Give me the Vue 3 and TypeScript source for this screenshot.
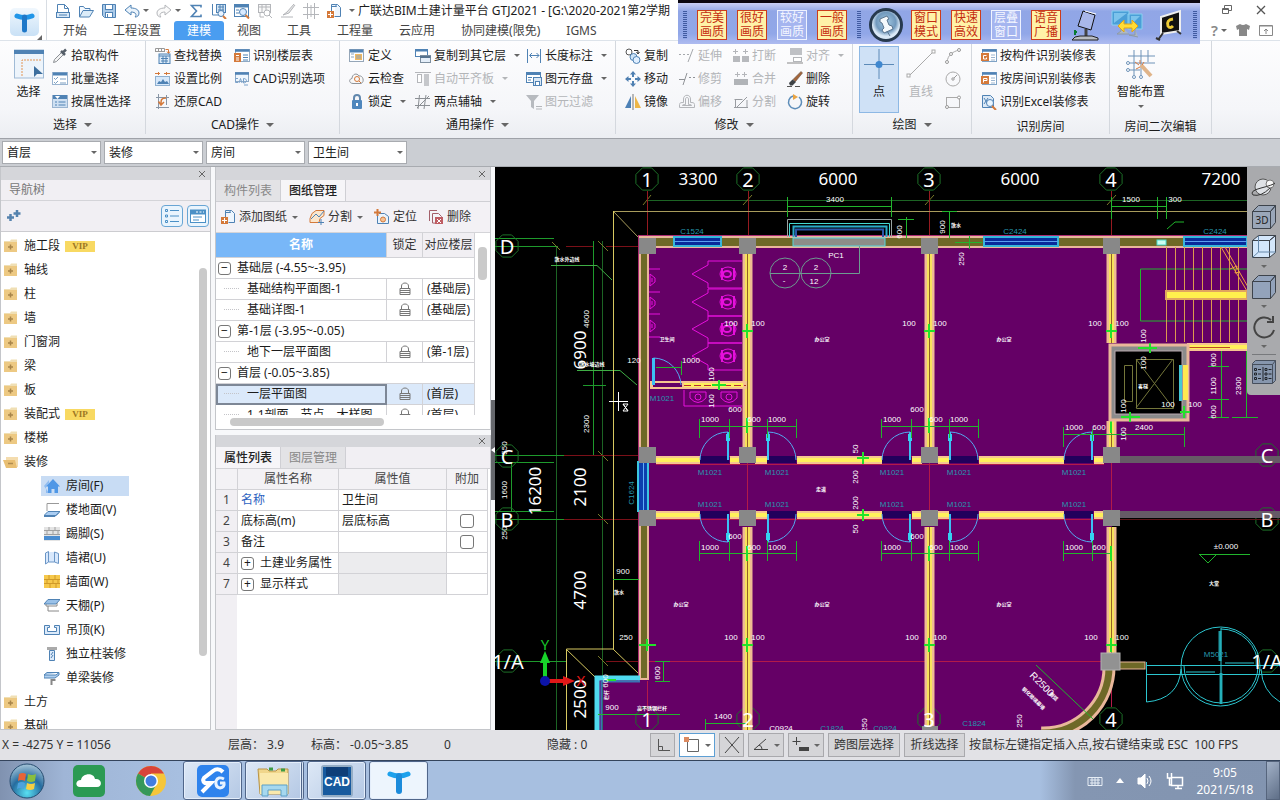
<script setup lang="ts">
import { ref } from 'vue'

type Tool = { icon: string; label: string; off?: boolean; caret?: boolean }
type Group = { id: string; title: string; caret?: boolean; columns: Tool[][] }
type Mark = [number, number, string, number?]

const B = '#4f82b4'
const O = '#d4793a'
const G = '#b4b6ba'

const icons: Record<string, string> = {
  newfile: `<path d="M2.5 1.5h7l4 4v4M2.5 1.5v8M9.5 1.5v4h4" fill="none" stroke="${B}"/><rect x="1.5" y="9.5" width="13" height="5" fill="#d9e9f8" stroke="${B}"/><path d="M4 12h8" stroke="${B}"/>`,
  open: `<path d="M1.500 14V3.500h4l1.500 2h5v2" fill="#f5faff" stroke="${B}"/><path d="M1.500 14L5 7.500h10.500L11.500 14z" fill="#dcecf8" stroke="${B}"/>`,
  save: `<path d="M1.500 1.500h13v13h-11l-2-2z" fill="#a9c9e8" stroke="${B}"/><rect x="4.500" y="1.500" width="7" height="5" fill="#fff" stroke="${B}"/><rect x="4.500" y="9.500" width="7" height="5" fill="#fff" stroke="${B}"/><path d="M6.500 11v3" stroke="${B}"/>`,
  undo: `<path d="M1 7l6-5v3c5 0 8 2 8 5s-2 4-4 4c2-2 1-5-4-5v3z" fill="#eaf3fb" stroke="${B}"/>`,
  redo: `<path d="M15 7L9 2v3C4 5 1 7 1 10s2 4 4 4C3 12 4 9 9 9v3z" fill="#fafafa" stroke="${G}"/>`,
  sum: `<path d="M13 4.500V2.500H3.500L8.500 8l-5 5.500H13v-2" fill="none" stroke="${B}" stroke-width="1.600"/>`,
  calc: `<path d="M1.500 1v11h6" fill="none" stroke="${B}"/><rect x="5.500" y="1.500" width="9" height="8" fill="#d5e5f3" stroke="${B}"/><path d="M7 4h6M7 7h6M9 2v7M12 2v7" stroke="${B}"/><circle cx="10" cy="10.500" r="3" fill="#eaf4ff" stroke="${B}"/><path d="M12 13l3 3" stroke="${O}" stroke-width="2"/>`,
  find: `<rect x=".5" y="1.500" width="14" height="12" fill="#fff" stroke="${B}"/><path d="M1 3h13" stroke="${B}" stroke-width="3"/><path d="M2 7h3M2 10h3" stroke="${B}"/><circle cx="9" cy="9" r="3.500" fill="#d9eaff" stroke="${B}"/><path d="M11.500 12l3.500 3.500" stroke="${O}" stroke-width="2"/>`,
  tablefind: `<rect x="1.500" y="1.500" width="12" height="8" fill="#f8f8f8" stroke="${G}"/><path d="M1 4h12M5 1v8M9 1v8M3 10v4h4" stroke="${G}" fill="none"/><circle cx="10" cy="10" r="3" fill="#fff" stroke="${G}"/><path d="M12 12l3 3" stroke="${G}"/>`,
  brush: `<path d="M14 1L7 9l-4 3 6-2 6-8M1 14h12" fill="#e8e8e8" stroke="${G}"/>`,
  gridg: `<path d="M0 4.500h16M0 11.500h16M4.500 0v16M11.500 0v16M8 2v12" stroke="${G}" fill="none"/>`,
  adddoc: `<path d="M5.500 10V1.500h4l1 2h-5M9.500 1.500h2l3 3v9h-6" fill="#edf6ff" stroke="${B}"/><rect x="1" y="8" width="7" height="7" fill="${O}"/><path d="M4.500 9v5M2 11.500h5" stroke="#fff"/>`,
  dropper: `<path d="M1.500 14.500l1-3L10 4l2 2-7.500 7.500z" fill="#f3f3f3" stroke="#8b8f94"/><path d="M9 3l4 4M10.500 5L14 1.500" stroke="#555e68" stroke-width="2.500"/>`,
  checks: `<rect x=".5" y="1.500" width="15" height="12" fill="#fff" stroke="#9ab4d0"/><path d="M1 3h14" stroke="${B}" stroke-width="3"/><path d="M2 7l1.500 1.500L6 6M2 11l1.500 1.500L6 10M8 8h6M8 12h6" stroke="#7a9dc0" fill="none"/>`,
  props: `<rect x=".5" y="1.500" width="15" height="12" fill="#cfe0f2" stroke="#9ab4d0"/><path d="M1 3h14" stroke="${B}" stroke-width="4"/><path d="M3 2h5l-2.500 3z" fill="#fff"/><path d="M3 8h2M6.500 8h7M3 11h2M6.500 11h7" stroke="${B}"/>`,
  replace: `<path d="M.5 3V.5h9V3M3.500 1v2M6.500 1v2M0 3.500h10" fill="none" stroke="#999"/><path d="M10.500 1.500h3V5M12 3.500L13.500 5.500 15 3.500" fill="none" stroke="${O}"/><rect x="4" y="6" width="11" height="9.500" fill="#ddebf8" stroke="${B}"/><path d="M4 8h11M6 10.500h7M6 13h7M8 8v7M11 8v7" stroke="${B}"/>`,
  scale: `<path d="M0 2.500h5M9 2.500h6M3.500 1v3M11.500 1v3" stroke="${O}"/><rect x=".5" y="5.500" width="14" height="9" fill="#d7e8fa" stroke="#8fb0d0"/><path d="M2 13l2-3 2 1 2-3 2 3 2-1 2 3z" fill="${B}"/>`,
  restore: `<path d="M3.500 0v15M11.500 1v10M1 3.500h13M1 13.500h13" stroke="#8895a5"/><path d="M11 4C6 4 6 6 6 10M3.500 7.500L6 11l3-3" fill="none" stroke="${O}" stroke-width="1.500"/>`,
  floors: `<rect x="1.500" y="1.500" width="14" height="12" fill="#fff" stroke="#8ea9c4"/><path d="M1 2.500h14.500" stroke="${B}" stroke-width="2.500"/><rect x="0" y="5" width="7" height="9" fill="${O}"/><path d="M2 7.500h3M2 10h3M2 12h3" stroke="#fff"/><path d="M9 7h5M9 9.500h5M9 12h5" stroke="${B}"/>`,
  cadopt: `<rect x="1.500" y="1.500" width="13" height="9" fill="#eff6fd" stroke="#8ea9c4"/><path d="M1 2.500h14" stroke="${B}" stroke-width="2.500"/><path d="M4 7.500H1.500v4H4M5 12l1.500-4.500L8 12M9.500 7.500v4.500c4 0 4-4.500 0-4.500M10 14h4" fill="none" stroke="#7ba2ca"/>`,
  define: `<rect x=".5" y="1.500" width="14" height="12" fill="#fbfdff" stroke="#95a6b8"/><path d="M1 3h13" stroke="${B}" stroke-width="3"/><rect x="6" y="6" width="7" height="6" fill="#f0b860"/><path d="M2 6h3M2 9h3M7 8h5M7 10h5" stroke="#8ba4bd"/>`,
  cloud: `<path d="M4 12.500C0 12.500-.5 8 3 7.500 3 3 8 1.500 10 5c4-1 6 6 2 7.500z" fill="#f8f8f8" stroke="#8e9399"/><circle cx="8" cy="8" r="2.500" fill="none" stroke="${O}"/><path d="M10 10l2 2" stroke="${O}"/>`,
  lock: `<path d="M5 7V4c0-4 6-4 6 0v3" fill="none" stroke="#6188ae" stroke-width="2"/><rect x="3" y="6" width="10" height="9" rx="1" fill="#4f87bd"/><path d="M8 9v3" stroke="#fff" stroke-width="2"/>`,
  layers: `<rect x=".5" y="1.500" width="12" height="7" fill="#fff" stroke="${B}"/><path d="M1 2.500h12" stroke="${B}" stroke-width="2"/><rect x="5.500" y="7.500" width="10" height="7" fill="#e4eef9" stroke="#7c8e9f"/><path d="M5 9h10.500" stroke="#56738f" stroke-width="2"/>`,
  align: `<path d="M0 1.500h16" stroke="${G}"/><rect x="2.500" y="3.500" width="4" height="8" fill="#fff" stroke="${G}"/><rect x="9" y="3" width="5" height="12" fill="#c5c7cb"/>`,
  axis: `<path d="M0 4.500h15M0 11.500h15M4.500 1L3 15M11 1L9 15M2 14L14 2" stroke="#8b8f94" fill="none"/>`,
  length: `<path d="M1.500 1v14M14.500 1v14M4 7.500h9M6 5L3.500 7.500 6 10M10.500 5L13 7.500 10.500 10" fill="none" stroke="${B}"/>`,
  store: `<rect x=".5" y="1.500" width="14" height="10" fill="#fff" stroke="${B}"/><path d="M1 3h13" stroke="${B}" stroke-width="2"/><path d="M2 6.500h4M2 9h3" stroke="${B}"/><rect x="7.500" y="6.500" width="8" height="8" fill="#dce9f6" stroke="${B}"/><rect x="9.500" y="10.500" width="4" height="4" fill="#fff" stroke="${B}"/>`,
  filter: `<path d="M0 1h13L8 7v8l-3-2V7z" fill="#b7babf"/><path d="M10 12.500h6M10 15h6" stroke="${G}"/>`,
  copy: `<circle cx="4" cy="4" r="3" fill="#fff" stroke="#555"/><path d="M9 2.500h4V5M11.500 4L13 6l1.500-2" fill="none" stroke="#333"/><circle cx="8.500" cy="9" r="3.500" fill="#cce3f8" stroke="${B}"/><circle cx="11.500" cy="12" r="3.500" fill="#e0efff" stroke="${B}"/>`,
  move: `<path d="M8 0l3 3.500H5zM8 16l3-3.500H5zM0 8l3.500-3v6zM16 8l-3.500-3v6z" fill="#4e7eb0"/><path d="M8 3v3M8 10v3M3 8h3M10 8h3" stroke="${B}" stroke-width="2"/>`,
  mirror: `<path d="M6 2v12H0z" fill="#4d81b6"/><path d="M8 0v16" stroke="#777"/><path d="M10 2v12h6z" fill="#eeb648"/>`,
  extend: `<path d="M0 6.500h2M4 6.500h2M8 6.500h2M9 14l5-13" stroke="#a5a8ac"/>`,
  trim: `<path d="M0 8.500h6M4 14L8 2M10 6.500h2M14 6.500h2" stroke="#909397"/>`,
  offset: `<path d="M.5 13.500v-3c0-2 2-2 4-2V5c0-5 7-5 7 0v3.500c2 0 4 0 4 2v3zM3.500 11.500h9c0-1-1-1-3-1V5c0-2-3-2-3 0v5.500c-2 0-3 0-3 1z" fill="none" stroke="${G}"/>`,
  breaks: `<path d="M2.500 1v5M0 3.500h5M12.500 1v5M10 3.500h5" stroke="${G}" fill="none"/><rect x="0" y="8" width="7" height="6" fill="#b7b9bd"/><rect x="9" y="8" width="7" height="6" fill="#b7b9bd"/>`,
  join: `<path d="M4.500 1v5M2 3.500h5M11.500 1v5M9 3.500h5" stroke="${G}" fill="none"/><rect x="1" y="8" width="14" height="6" fill="#b0b3b7"/>`,
  split: `<path d="M1.500 5.500h8M2.500 5v9M1 13.500h14M14 13V6M4 13L14 3" fill="none" stroke="#999ca1"/>`,
  aligng: `<rect x="3" y="0" width="12" height="7" fill="#bfc1c5"/><rect x="6.500" y="9.500" width="8" height="4" fill="#fff" stroke="${G}"/><path d="M0 15h16" stroke="#888"/>`,
  erase: `<path d="M6 8.500L14 .5l1.500 1.500-7 8.500z" fill="#a4653a" stroke="#665045" stroke-width=".6"/><path d="M2 12l3.500-3.500L9 11l-3.500 3.500H3z" fill="#3d4246"/><path d="M0 15.500h15" stroke="#555" stroke-dasharray="5 3"/>`,
  rotate: `<path d="M12 3a6.500 6.500 0 1 1-6-1" fill="none" stroke="#5d8db9" stroke-width="1.500"/><path d="M6 0l5 3-5 3z" fill="#e8a445"/>`,
  arc: `<path d="M2 14C3 7 7 4 14 2" fill="none" stroke="#aaa"/><circle cx="2" cy="14" r="1.500" fill="#fff" stroke="#999"/><circle cx="6" cy="6" r="1.500" fill="#fff" stroke="#999"/><circle cx="14" cy="2" r="1.500" fill="#fff" stroke="#999"/>`,
  circle: `<circle cx="8" cy="8" r="7" fill="none" stroke="#aaa"/><circle cx="8" cy="8" r="1.200" fill="none" stroke="#999"/><path d="M9 7l3-3" stroke="#999"/>`,
  rect: `<rect x="1.500" y="3.500" width="13" height="10" fill="none" stroke="#aaa"/><circle cx="14" cy="3.500" r="1.500" fill="#fff" stroke="#999"/><circle cx="2" cy="13" r="1.500" fill="#fff" stroke="#999"/>`,
  recog: `<rect x="1.500" y="1.500" width="14" height="12" fill="#fff" stroke="#7fa3c6"/><path d="M1 2.500h14.500" stroke="${B}" stroke-width="2.500"/><rect x="0" y="5" width="8" height="8" fill="${O}"/><path d="M5.500 7.500h-3v3.500h3V9.500" fill="none" stroke="#fff"/><path d="M10 7h4M10 9.500h4M10 12h4" stroke="#9bb5cf"/>`,
  recogf: `<rect x="1.500" y="1.500" width="14" height="12" fill="#fff" stroke="#7fa3c6"/><path d="M1 2.500h14.500" stroke="${B}" stroke-width="2.500"/><rect x="0" y="5" width="8" height="8" fill="${O}"/><path d="M2.500 11.500v-4h3.500v2H3" fill="none" stroke="#fff"/><path d="M10 7h4M10 9.500h4M10 12h4" stroke="#9bb5cf"/>`,
  excel: `<path d="M1.500 1.500h8l3 3v9h-11z" fill="#dce9f6" stroke="${B}"/><path d="M3 4l4 6M3 10l4-6" stroke="${B}"/><circle cx="9" cy="9" r="3.500" fill="#eaf5ff" stroke="${B}"/><path d="M11 12l4 4" stroke="${O}" stroke-width="2"/>`,
  cut: `<path d="M3 4.500L7 1.500h8v5l-4 3-1 4H1v-4z" fill="#fae6cd" stroke="${O}"/><path d="M2 10l5-5 3 3 5-6M9 13.500h6M12 10v6" stroke="${B}" fill="none"/>`,
  locate: `<path d="M5 4.500h5.500l4 3v7H3.500V7" fill="#e9f3fc" stroke="${B}"/><path d="M3.500 0v7M0 3.500h7" stroke="${O}" stroke-width="2"/><circle cx="9" cy="10.500" r="2.500" fill="#f5c195" stroke="${O}"/>`,
  remove: `<path d="M1.500 12V1.500H9M4.500 14V4.500h6l3 3v7z" fill="#f3f5f8" stroke="#a4606a"/><rect x="7" y="8" width="8" height="7" fill="#bf5d63"/><path d="M9 10l4 4M13 10l-4 4" stroke="#fff"/>`,
  folder: `<path d="M1 3h6l1-1.500h6V5H1z" fill="#f0dfb4"/><rect x="1" y="4" width="13" height="10" fill="#edc983"/><path d="M7.500 6.500v5M5 9h5" stroke="#a8854a" stroke-width="1.500"/>`,
  folderopen: `<path d="M3 3h12v10H3z" fill="#f4dcae"/><path d="M0 6h12l2 8H3z" fill="#e9bf72"/><path d="M5 9.500h5" stroke="#b08c50" stroke-width="1.500"/>`,
  house: `<path d="M0 8L5 2v3L2 9v6h3" fill="#8fbcf0"/><path d="M2 8.500L9 1l7 7.500h-2V15h-3.500v-4h-3v4H4V8.500z" fill="#4f97e6"/>`,
  floor: `<path d="M3 9V1.500h12" fill="none" stroke="#999"/><path d="M4 9.500h12l-4 4H0z" fill="#aacdf2" stroke="${B}"/><path d="M0 14.500h11l4-4" stroke="${B}" fill="none"/>`,
  skirting: `<rect x="0" y="1" width="16" height="14" fill="#e4e4e4"/><path d="M0 4.500h16M0 8.500h16M5 1v3M11 1v3M3 5v3M9 5v3M14 5v3" stroke="#a0a0a0"/><rect x="0" y="10" width="16" height="4" fill="#4b8dd0"/>`,
  dado: `<path d="M1.500 3v11l3-2V1.500zM4.500 2v10h6V2M10.500 2l4 1.500v10L10.500 12" fill="#d8e8fc" stroke="#6b96c6"/>`,
  brick: `<rect x="0" y="1" width="16" height="13" fill="#f6c84b"/><path d="M0 5.500h16M0 9.500h16M5 1v4M11 1v4M3 6v3M9 6v3M14 6v3M6 10v4M12 10v4" stroke="#d09a28"/>`,
  ceiling: `<path d="M4 1.500h12L12 6H0z" fill="#9ac1e8" stroke="${B}"/><path d="M2 6v2h11V5M4 8v5h11" fill="none" stroke="#888"/>`,
  hung: `<path d="M.5 3.500h5v2h-2v4h9v-4h-2v-2h5v9H.5z" fill="#dceafa" stroke="${B}"/>`,
  pillar: `<rect x="3" y="1" width="10" height="3" fill="#aaa"/><path d="M5.500 4.500h5v10h-5z" fill="#dceafa" stroke="${B}"/><path d="M7 12l2-3M7 9l2-3" stroke="${B}"/>`,
  beam: `<path d="M3 2.500h12L12 5H0zM0 5v3h11l4-3V2.500" fill="#b0d0f0" stroke="${B}"/><path d="M7.500 9v6M7.500 10h4" stroke="#888" stroke-width="2" fill="none"/>`,
}

const quick = [
  { i: 'newfile' }, { i: 'open' }, { i: 'save' }, { i: 'undo', c: true }, { i: 'redo', c: true }, { i: 'sum' },
  { i: 'calc' }, { i: 'find' }, { i: 'tablefind' }, { i: 'brush' }, { i: 'gridg' }, { i: 'adddoc' },
]
const menus = ['开始', '工程设置', '建模', '视图', '工具', '工程量', '云应用', '协同建模(限免)', 'IGMS']
const activeMenu = ref('建模')

const groups: Group[] = [
  { id: 'g-cad', title: 'CAD操作', caret: true, columns: [
    [{ icon: 'replace', label: '查找替换' }, { icon: 'scale', label: '设置比例' }, { icon: 'restore', label: '还原CAD' }],
    [{ icon: 'floors', label: '识别楼层表' }, { icon: 'cadopt', label: 'CAD识别选项' }]] },
  { id: 'g-common', title: '通用操作', caret: true, columns: [
    [{ icon: 'define', label: '定义' }, { icon: 'cloud', label: '云检查' }, { icon: 'lock', label: '锁定', caret: true }],
    [{ icon: 'layers', label: '复制到其它层', caret: true }, { icon: 'align', label: '自动平齐板', off: true, caret: true }, { icon: 'axis', label: '两点辅轴', caret: true }],
    [{ icon: 'length', label: '长度标注', caret: true }, { icon: 'store', label: '图元存盘', caret: true }, { icon: 'filter', label: '图元过滤', off: true }]] },
  { id: 'g-edit', title: '修改', caret: true, columns: [
    [{ icon: 'copy', label: '复制' }, { icon: 'move', label: '移动' }, { icon: 'mirror', label: '镜像' }],
    [{ icon: 'extend', label: '延伸', off: true }, { icon: 'trim', label: '修剪', off: true }, { icon: 'offset', label: '偏移', off: true }],
    [{ icon: 'breaks', label: '打断', off: true }, { icon: 'join', label: '合并', off: true }, { icon: 'split', label: '分割', off: true }],
    [{ icon: 'aligng', label: '对齐', off: true, caret: true }, { icon: 'erase', label: '删除' }, { icon: 'rotate', label: '旋转' }]] },
]
const pick: Tool[] = [{ icon: 'dropper', label: '拾取构件' }, { icon: 'checks', label: '批量选择' }, { icon: 'props', label: '按属性选择' }]
const recog: Tool[] = [{ icon: 'recog', label: '按构件识别装修表' }, { icon: 'recogf', label: '按房间识别装修表' }, { icon: 'excel', label: '识别Excel装修表' }]

const selectors = [
  { name: '楼层', value: '首层' }, { name: '构件分类', value: '装修' },
  { name: '构件类型', value: '房间' }, { name: '构件', value: '卫生间' },
]

const nav = [
  { t: '施工段', vip: true }, { t: '轴线' }, { t: '柱' }, { t: '墙' }, { t: '门窗洞' }, { t: '梁' }, { t: '板' },
  { t: '装配式', vip: true }, { t: '楼梯' },
  { t: '装修', kids: [
    ['house', '房间(F)'], ['floor', '楼地面(V)'], ['skirting', '踢脚(S)'], ['dado', '墙裙(U)'], ['brick', '墙面(W)'],
    ['ceiling', '天棚(P)'], ['hung', '吊顶(K)'], ['pillar', '独立柱装修'], ['beam', '单梁装修']] },
  { t: '土方' }, { t: '基础' },
]
const activeNav = ref('房间(F)')

const sheets = [
  { g: true, n: '基础层 (-4.55~-3.95)' },
  { n: '基础结构平面图-1', f: '(基础层)' }, { n: '基础详图-1', f: '(基础层)' },
  { g: true, n: '第-1层 (-3.95~-0.05)' }, { n: '地下一层平面图', f: '(第-1层)' },
  { g: true, n: '首层 (-0.05~3.85)' }, { n: '一层平面图', f: '(首层)', on: true },
  { n: '1-1剖面、节点、大样图', f: '(首层)' },
]
const attrs = [
  { k: 1, n: '名称', v: '卫生间', blue: true }, { k: 2, n: '底标高(m)', v: '层底标高', box: true },
  { k: 3, n: '备注', v: '', box: true }, { k: 4, n: '土建业务属性', v: '', fold: true }, { k: 7, n: '显示样式', v: '', fold: true },
]

const remoteA = [['完美', '画质'], ['很好', '画质'], ['较好', '画质'], ['一般', '画质']]
const remoteB = [['窗口', '模式'], ['快速', '高效'], ['层叠', '窗口'], ['语音', '广播']]

/* plan drawing */
const axisMarks: Mark[] = [
  [647, 178, '1'], [748, 178, '2'], [929, 178, '3'], [1111, 178, '4'], [507, 245, 'D'], [507, 455, 'C'], [507, 518, 'B'],
  [1267, 454, 'C'], [1267, 518, 'B'], [647, 718, '1'], [748, 718, '2'], [929, 718, '3'], [1111, 718, '4'],
  [508, 660, '1/A'], [1267, 660, '1/A'],
]
const bigDims: Mark[] = [
  [698, 177, '3300'], [838, 177, '6000'], [1020, 177, '6000'], [1221, 177, '7200'],
  [579, 349, '6900', -90], [534, 490, '16200', -90], [579, 486, '2100', -90], [579, 589, '4700', -90], [579, 698, '2500', -90],
]
const dims: Mark[] = [
  [835, 198, '3400'], [1131, 198, '1500'], [1175, 198, '300'], [899, 231, '600', -90], [942, 226, '900', -90], [961, 258, '250', -90],
  [731, 322, '100'], [758, 322, '100'], [909, 322, '100'], [940, 322, '100'], [1095, 322, '100'], [1122, 322, '100'],
  [731, 636, '100'], [758, 636, '100'], [912, 636, '100'], [940, 636, '100'], [1091, 636, '100'], [1122, 636, '100'],
  [634, 359, '120'], [691, 359, '1000'], [711, 373, '100', -90], [711, 400, '100', -90],
  [586, 318, '4600', -90], [586, 423, '2300', -90], [504, 489, '1600', -90], [504, 532, '250', -90], [504, 447, '550', -90],
  [710, 418, '1000'], [735, 408, '600'], [754, 418, '600'], [777, 418, '1000'], [892, 418, '1000'], [917, 408, '600'],
  [936, 418, '600'], [959, 418, '1000'], [1074, 426, '1000'], [1099, 426, '600'], [1144, 426, '2400'],
  [710, 546, '1000'], [735, 535, '600'], [754, 546, '600'], [777, 546, '1000'], [892, 546, '1000'], [917, 535, '600'],
  [936, 546, '600'], [959, 546, '1000'], [1074, 546, '1000'], [1099, 546, '600'],
  [855, 448, '50', -90], [855, 476, '200', -90], [855, 502, '200', -90], [855, 528, '50', -90],
  [1143, 335, '100', -90], [1143, 362, '100', -90], [1123, 405, '100', -90], [1123, 433, '100', -90], [1168, 403, '100'], [1195, 403, '100'],
  [1213, 359, '600', -90], [1213, 385, '1100', -90], [1213, 411, '600', -90], [1238, 385, '2300', -90],
  [623, 570, '900'], [626, 636, '250'], [657, 672, '600', -90], [612, 706, '900'], [605, 680, '600', -90], [723, 715, '1400'],
  [1226, 545, '±0.000'], [836, 254, 'PC1'], [785, 266, '2'], [784, 279, '-'], [816, 266, '2'], [814, 280, '12'],
  [781, 727, 'C0924'], [864, 724, '250', -90], [1019, 720, '250', -90],
]
const notes: Mark[] = [
  [567, 257, '散水外边线'], [592, 362, '散水坡边线'], [667, 337, '卫生间'], [822, 337, '办公室'], [1004, 337, '办公室'],
  [681, 602, '办公室'], [822, 602, '办公室'], [1004, 602, '办公室'], [821, 487, '走道'], [1214, 581, '大堂'],
  [1143, 384, '客梯'], [619, 590, '散水'], [956, 223, '散水'], [652, 706, '高不锈钢栏杆'], [605, 694, '栏杆', -90],
]
const codes: Mark[] = [
  [692, 230, 'C1524'], [1015, 230, 'C2424'], [1215, 230, 'C2424'], [662, 397, 'M1021'], [631, 492, 'C1624', -90],
  [710, 471, 'M1021'], [777, 471, 'M1021'], [892, 471, 'M1021'], [959, 471, 'M1021'], [1074, 471, 'M1021'],
  [710, 503, 'M1021'], [777, 503, 'M1021'], [892, 503, 'M1021'], [959, 503, 'M1021'], [1074, 503, 'M1021'],
  [832, 727, 'C1824'], [885, 727, 'C0924'], [974, 722, 'C1824'], [1216, 653, 'M5021'],
]
const doors = [
  { l: 700, hinge: 728, free: 700 }, { l: 767, hinge: 768, free: 796 }, { l: 882, hinge: 910, free: 882 },
  { l: 949, hinge: 950, free: 978 }, { l: 1064, hinge: 1092, free: 1064 },
]
const columnsAt: [number, number][] = []
for (const x of [639, 739, 921, 1103]) for (const y of [237, 446, 509]) columnsAt.push([x, y])
const wallRuns: [number, number][] = [[656, 700], [730, 740], [755, 767], [797, 882], [912, 922], [938, 949], [979, 1064], [1094, 1104]]
const octagon = (x: number, y: number, r: number) =>
  Array.from({ length: 8 }, (_, i) => {
    const a = Math.PI / 8 + (i * Math.PI) / 4
    return `${(x + r * Math.cos(a)).toFixed(1)},${(y + r * Math.sin(a)).toFixed(1)}`
  }).join(' ')
const turn = (m: Mark) => (m[3] ? `rotate(${m[3]} ${m[0]} ${m[1]})` : undefined)
</script>

<template>
  <div class="app">
    <header class="top">
      <button class="logo" aria-label="主菜单">
        <svg viewBox="0 0 46 41" width="46" height="41">
          <defs><linearGradient id="tile" x2="0" y2="1"><stop stop-color="#f0f7fd" /><stop offset="1" stop-color="#c9e1f6" /></linearGradient></defs>
          <rect x="10" y="8" width="29" height="28" rx="5" fill="url(#tile)" />
          <path d="M17 16q7.500 3 15 0" fill="none" stroke="#2196e8" stroke-width="5" stroke-linecap="round" />
          <path d="M24.500 17v13" stroke="#1f78c8" stroke-width="5" stroke-linecap="round" />
          <path d="M42 35v5h-5z" fill="#666" />
        </svg>
      </button>
      <div class="head">
        <div class="titlebar">
          <button v-for="q in quick" :key="q.i" class="q" :aria-label="q.i">
            <svg class="ic" viewBox="0 0 16 16" v-html="icons[q.i]" /><span v-if="q.c" class="caret" />
          </button>
          <span class="caret" />
          <span class="title">广联达BIM土建计量平台 GTJ2021 - [G:\2020-2021第2学期</span>
        </div>
        <nav class="menus">
          <button v-for="m in menus" :key="m" :class="{ on: m === activeMenu }" @click="activeMenu = m">{{ m }}</button>
        </nav>
      </div>
      <div class="winctl">
        <div class="wrow">
          <button aria-label="还原"><svg viewBox="0 0 12 12" width="12" height="12" fill="none" stroke="#666"><path d="M3.500 4V1.500h7v5H8M1.500 4.500h6v5h-6zM2 5.500h5" /></svg></button>
          <button aria-label="关闭"><svg viewBox="0 0 12 12" width="12" height="12" stroke="#555" stroke-width="1.300"><path d="M2 2l8 8M10 2l-8 8" /></svg></button>
        </div>
        <div class="wrow low">
          <button class="help" aria-label="帮助">?<span class="caret" /></button>
          <button aria-label="皮肤"><svg viewBox="0 0 14 14" width="14" height="14"><path d="M0 3l4-2q3 2 6 0l4 2-1 4-2-1v7H3V6L1 7z" fill="#888" /></svg></button>
          <button aria-label="收起"><svg viewBox="0 0 14 14" width="14" height="14" fill="none" stroke="#888"><path d="M.5 2.500h13v10H.5zM0 3h13M7 11V6M5 8l2-2 2 2" /></svg></button>
        </div>
      </div>
    </header>

    <aside class="remote">
      <span class="grip" />
      <button v-for="(r, i) in remoteA" :key="i" class="rb" :class="{ dim: i === 2 }">{{ r[0] }}<br>{{ r[1] }}</button>
      <span class="grip" />
      <button class="pin" aria-label="固定">
        <svg viewBox="0 0 36 36" width="36" height="36">
          <defs><radialGradient id="ball" cy=".4"><stop stop-color="#a5cbe4" /><stop offset=".7" stop-color="#7199bd" /><stop offset="1" stop-color="#d9e8f6" /></radialGradient></defs>
          <circle cx="18" cy="18" r="17" fill="#26394e" /><circle cx="18" cy="18" r="14" fill="url(#ball)" />
          <path d="M12 12l7-3 2 3-2 1 2 5 3 1 1 3-9 4-2-3 2-2-2-5-2-1zM19 24l3 5" fill="#f5f9fc" stroke="#5c7690" />
        </svg>
      </button>
      <button v-for="(r, i) in remoteB" :key="'b' + i" class="rb" :class="{ dim: i === 2 }">{{ r[0] }}<br>{{ r[1] }}</button>
      <button class="ri" aria-label="书写板"><svg viewBox="0 0 30 32" width="30" height="32"><path d="M12 2l12 4-4 15-13-4z" fill="#a9b8ea" stroke="#111" /><path d="M14 2l11 3" stroke="#fff" /><path d="M15 20v7" stroke="#444" stroke-width="3" /><path d="M4 28l5-1h12l6 2v2H1z" fill="#b9bdc3" stroke="#222" /><path d="M4 21v5M3 23h3" stroke="#087b32" stroke-width="2" /></svg></button>
      <button class="ri" aria-label="切换"><svg viewBox="0 0 32 32" width="32" height="32"><path d="M1 2h17v14H1zM17 5h14v15H17z" fill="#4a9fd7" stroke="#89d0f1" /><path d="M3 4h13L3 14zM20 7h9L20 16z" fill="#7cc3ec" /><path d="M10 17v5l-4 3h12M24 20v6h-6l9 2" stroke="#8d99a6" fill="#aeb8c3" /><path d="M7 17l6-6v4h8v-4l6 6-6 6v-4h-8v4z" fill="#ffdc35" stroke="#dfa519" /></svg></button>
      <button class="ri" aria-label="投屏"><svg viewBox="0 0 30 32" width="30" height="32"><path d="M8 8L27 2v20L8 25z" fill="#111" stroke="#eee" stroke-width="2" /><path d="M20 10q-7 1-5 7 2 3 5 0" stroke="#edcb35" stroke-width="3" fill="none" /><path d="M10 24l-5 7M3 29l4 2M24 22l4 3" stroke="#333" stroke-width="2" /></svg></button>
      <span class="grip" />
    </aside>

    <section class="ribbon">
      <div class="group g-pick">
        <div class="tools">
          <button class="big">
            <svg viewBox="0 0 30 30" width="30" height="30"><rect x=".5" y="1" width="29" height="28" fill="#edf4fb" stroke="#a0bbd6" /><path d="M0 3h30" stroke="#4f82b4" stroke-width="4" /><path d="M8 27V11h20" fill="none" stroke="#e39555" stroke-dasharray="2 1" /><path d="M20 17v11l3-3h6z" fill="#3d6f9e" /></svg>
            <span>选择</span>
          </button>
          <div class="col"><button v-for="t in pick" :key="t.label" class="tool"><svg class="ic" viewBox="0 0 16 16" v-html="icons[t.icon]" />{{ t.label }}</button></div>
        </div>
        <div class="gt">选择<span class="caret big-caret" /></div>
      </div>
      <div v-for="g in groups" :key="g.id" class="group" :class="g.id">
        <div class="tools">
          <div v-for="(c, ci) in g.columns" :key="ci" class="col">
            <button v-for="t in c" :key="t.label" class="tool" :class="{ off: t.off }">
              <svg class="ic" viewBox="0 0 16 16" v-html="icons[t.icon]" />{{ t.label }}<span v-if="t.caret" class="caret" />
            </button>
          </div>
        </div>
        <div class="gt">{{ g.title }}<span class="caret big-caret" /></div>
      </div>
      <div class="group g-draw">
        <div class="tools">
          <button class="big on">
            <svg viewBox="0 0 30 30" width="30" height="30"><path d="M15 0v30M0 15.500h30" stroke="#5c8ab8" /><circle cx="15" cy="15.500" r="3.500" fill="#3f87cf" /></svg><span>点</span>
          </button>
          <button class="big off">
            <svg viewBox="0 0 30 30" width="30" height="30" stroke="#aaa" fill="#fff"><path d="M3 27L27 3" /><rect x="1" y="25" width="3" height="3" /><rect x="26" y="1" width="3" height="3" /></svg><span>直线</span>
          </button>
          <div class="col mini">
            <button v-for="i in ['arc', 'circle', 'rect']" :key="i" class="tool" :aria-label="i"><svg class="ic" viewBox="0 0 16 16" v-html="icons[i]" /></button>
          </div>
        </div>
        <div class="gt">绘图<span class="caret big-caret" /></div>
      </div>
      <div class="group g-room">
        <div class="tools"><div class="col"><button v-for="t in recog" :key="t.label" class="tool"><svg class="ic" viewBox="0 0 16 16" v-html="icons[t.icon]" />{{ t.label }}</button></div></div>
        <div class="gt low">识别房间</div>
      </div>
      <div class="group g-second">
        <div class="tools">
          <button class="big wide">
            <svg viewBox="0 0 30 30" width="30" height="30" fill="none" stroke="#6f93b8"><path d="M2 7h27M2 14h27M2 21h12M8 1v25M15 1v27M22 1v12" /><g fill="#fff"><circle cx="2" cy="14" r="1.500" /><circle cx="2" cy="21" r="1.500" /><circle cx="8" cy="28" r="1.500" /><circle cx="15" cy="28" r="1.500" /></g><path d="M15 16l10 11" stroke="#e0b489" stroke-width="4" /><path d="M9 13l4 3M14 11v4M10 20l4-2M18 13l-2 3" stroke="#d97a40" /></svg>
            <span>智能布置</span><span class="caret" />
          </button>
        </div>
        <div class="gt low">房间二次编辑</div>
      </div>
    </section>

    <section class="selectors">
      <label v-for="s in selectors" :key="s.name" class="sel"><select :aria-label="s.name"><option>{{ s.value }}</option></select><span class="caret" /></label>
    </section>

    <main class="main">
      <section class="panel navp">
        <div class="strip"><button aria-label="关闭导航树"><svg viewBox="0 0 8 8" width="8" height="8" stroke="#666"><path d="M1 1l6 6M7 1L1 7" /></svg></button></div>
        <h2>导航树</h2>
        <div class="navtools">
          <svg viewBox="0 0 14 14" width="14" height="14"><path d="M3.500 5v7M0 8.500h7M10 1v7M6.500 4.500h7" stroke="#5583ae" stroke-width="2.500" /></svg>
          <button class="view" aria-label="列表视图"><svg viewBox="0 0 16 16" width="16" height="16" fill="none" stroke="#4b90c6"><path d="M1.500 1.500h2v2h-2zM1.500 7h2v2h-2zM1.500 12.500h2v2h-2zM6 2.500h9M6 8h9M6 13.500h9" /></svg></button>
          <button class="view" aria-label="卡片视图"><svg viewBox="0 0 16 16" width="16" height="16"><rect x=".5" y="2.500" width="15" height="12" fill="#fff" stroke="#4b90c6" /><path d="M0 4h16" stroke="#4b90c6" stroke-width="5" /><path d="M3 9h9M3 12h6" stroke="#4b90c6" /><path d="M6 4h2M9.500 4h2M13 4h1" stroke="#fff" /></svg></button>
        </div>
        <div class="navbody">
          <ul class="tree">
            <li v-for="n in nav" :key="n.t">
              <button class="node"><svg class="fi" viewBox="0 0 16 16" v-html="icons[n.kids ? 'folderopen' : 'folder']" />{{ n.t }}<span v-if="n.vip" class="vip">VIP</span></button>
              <ul v-if="n.kids">
                <li v-for="k in n.kids" :key="k[1]"><button class="leaf" :class="{ on: k[1] === activeNav }" @click="activeNav = k[1]"><svg class="ic" viewBox="0 0 16 16" v-html="icons[k[0]]" />{{ k[1] }}</button></li>
              </ul>
            </li>
          </ul>
          <span class="vbar" />
        </div>
      </section>

      <div class="middle">
        <section class="panel sheetp">
          <div class="strip"><button aria-label="关闭图纸管理"><svg viewBox="0 0 8 8" width="8" height="8" stroke="#666"><path d="M1 1l6 6M7 1L1 7" /></svg></button></div>
          <div class="tabs"><button>构件列表</button><button class="on">图纸管理</button></div>
          <div class="stools">
            <button><svg class="ic" viewBox="0 0 16 16" v-html="icons.adddoc" />添加图纸<span class="caret" /></button>
            <button><svg class="ic" viewBox="0 0 16 16" v-html="icons.cut" />分割<span class="caret" /></button>
            <button><svg class="ic" viewBox="0 0 16 16" v-html="icons.locate" />定位</button>
            <button><svg class="ic" viewBox="0 0 16 16" v-html="icons.remove" />删除</button>
          </div>
          <div class="sheetbody">
            <div class="clip">
              <table class="sheets">
                <colgroup><col class="c1"><col class="c2"><col></colgroup>
                <thead><tr><th class="hot">名称</th><th>锁定</th><th>对应楼层</th></tr></thead>
                <tbody>
                  <tr v-for="s in sheets" :key="s.n" :class="{ on: s.on }">
                    <td v-if="s.g" colspan="3" class="gr"><button class="fold" aria-label="折叠">−</button>{{ s.n }}</td>
                    <template v-else>
                      <td class="nm"><i class="branch" />{{ s.n }}</td>
                      <td class="lk"><svg viewBox="0 0 12 14" width="12" height="14" fill="none" stroke="#777"><path d="M2.500 7V4c0-4 7-4 7 0v3M1 6.500h10v6H1zM1 8.500h10M1 10.500h10" /></svg></td>
                      <td>{{ s.f }}</td>
                    </template>
                  </tr>
                </tbody>
              </table>
            </div>
            <div class="rail"><span /></div>
          </div>
          <div class="hrail"><span /></div>
        </section>

        <section class="panel attrp">
          <div class="strip"><button aria-label="关闭属性列表"><svg viewBox="0 0 8 8" width="8" height="8" stroke="#666"><path d="M1 1l6 6M7 1L1 7" /></svg></button></div>
          <div class="tabs"><button class="on">属性列表</button><button>图层管理</button></div>
          <div class="attrbody">
            <table class="attrs">
              <colgroup><col class="a1"><col class="a2"><col><col class="a4"></colgroup>
              <thead><tr><th /><th>属性名称</th><th>属性值</th><th>附加</th></tr></thead>
              <tbody>
                <tr v-for="a in attrs" :key="a.k">
                  <td class="no">{{ a.k }}</td>
                  <td :class="{ blue: a.blue }"><button v-if="a.fold" class="fold" aria-label="展开">+</button>{{ a.n }}</td>
                  <td :class="{ grey: a.fold }">{{ a.v }}</td>
                  <td class="ck"><input v-if="a.box" type="checkbox" :aria-label="'附加' + a.n"></td>
                </tr>
              </tbody>
            </table>
          </div>
        </section>
      </div>

      <button class="splitter" aria-label="收起面板"><svg viewBox="0 0 4 6" width="4" height="6"><path d="M4 0v6L0 3z" fill="#fff" /></svg></button>

      <section class="canvas">
        <svg class="plan" viewBox="495 166 785 564" preserveAspectRatio="xMinYMin slice" role="img" aria-label="一层平面图">
          <rect x="495" y="166" width="785" height="564" fill="#000" />
          <path d="M646 244H1280V514H1112V664A66 66 0 0 1 1046 730H598V678H646Z" fill="#650066" />

          <!-- guide lines -->
          <g fill="none" stroke="#1c6424">
            <path d="M647 199.500H1247M556.500 245V730M602.500 240V730M593.500 245V455" />
            <path d="M495 237.500H554M495 245.500H558M495 461.500H554M495 510.500H554M495 518.500H564M495 454.500H564M495 660.500H567M511.500 461V510M593.500 240V455M583 384.500H606" stroke="#1e9a2c" />
            <path d="M551 264.500H597L612 279M577 369.500H620L637 384" stroke="#3fae45" />
            <path d="M552 241l8 8M598 240l10 10M598 450l10 10M598 513l10 10M598 655l10 10M643 204l8-10M743 204l9-10M925 204l9-10M1107 204l9-10" stroke="#7a7a2a" />
          </g>
          <path d="M566 245.500H593M606 245.500H638M564 454.500H647M564 518.500H647M606 660.500H640" stroke="#7a1018" />
          <path d="M647.500 190V236M748.500 190V236M929.500 190V236M1111.500 190V236" stroke="#961a20" />
          <g fill="none">
            <path d="M1247 210.500H613.500L638 236" stroke="#a89c5c" />
            <path d="M613.500 210V648H566.500V730M566 648L595 676M613 648L639 673" stroke="#d6c860" />
          </g>
          <polygon v-for="(m, i) in axisMarks" :key="'o' + i" :points="octagon(m[0], m[1], 12)" fill="none" stroke="#1d7028" />

          <!-- outer walls -->
          <rect x="640" y="236" width="607" height="10" fill="#6e6927" stroke="#e9b79a" stroke-width="2" />
          <rect x="640" y="246" width="8" height="432" fill="#6e6927" stroke="#e9b79a" stroke-width="2" />
          <path d="M638.500 234V680M638 234.500H1247" stroke="#aa2a72" fill="none" />
          <g v-for="w in [[674, 47], [984, 74], [1184, 63]]" :key="w[0]">
            <rect :x="w[0]" y="236" :width="w[1]" height="9" fill="#082a9a" stroke="#35b7da" stroke-width="2" />
            <path :d="`M${w[0]} 240.500h${w[1]}`" stroke="#5aa0f0" />
          </g>
          <rect x="638" y="461" width="10" height="49" fill="#0c3fae" stroke="#3cc6e0" stroke-width="2" />
          <path d="M643.500 461v49" stroke="#5fb0f8" />
          <rect x="793" y="237" width="92" height="8" fill="#8d8d88" stroke="#54d7dc" />
          <g fill="none"><path d="M787.500 236V218.500H891.500V236" stroke="#9aa4a4" /><path d="M789.500 236V222.500H889.500V236" stroke="#46d8d0" /><path d="M793.500 236V225.500H886.500V236" stroke="#2aa9c9" stroke-width="2" /><path d="M796 236V228.500H883V236" stroke="#2b55a8" stroke-width="2" /></g>

          <!-- grid lines over rooms -->
          <path d="M647.500 680V712M747.500 462V509M929.500 462V509M1111.500 462V509M1111.500 669V706M649 660.500H1101M656 455.500H1104M656 463.500H1104M656 518.500H1104" stroke="#b31a48" fill="none" />

          <!-- inner walls -->
          <g v-for="x in [743, 925, 1107]" :key="x">
            <path :d="x === 1107 ? `M${x + 4.5} 253V342M${x + 4.5} 420V446M${x + 4.5} 526V652` : `M${x + 4.5} 253V446M${x + 4.5} 526V730`" stroke="#efbb92" stroke-width="10" />
            <path :d="x === 1107 ? `M${x + 4.5} 253V342M${x + 4.5} 420V446M${x + 4.5} 526V652` : `M${x + 4.5} 253V446M${x + 4.5} 526V730`" stroke="#f7e25b" stroke-width="5" />
            <path :d="x === 1107 ? `M${x + 4.5} 253V342M${x + 4.5} 420V446M${x + 4.5} 526V652` : `M${x + 4.5} 253V446M${x + 4.5} 526V730`" stroke="#946028" />
          </g>
          <g v-for="y in [455, 510]" :key="y">
            <g v-for="r in wallRuns" :key="r[0]">
              <rect :x="r[0]" :y="y" :width="r[1] - r[0]" height="8" fill="#f6c490" /><rect :x="r[0]" :y="y + 2" :width="r[1] - r[0]" height="4" fill="#fff05b" />
            </g>
            <rect x="1120" :y="y" width="160" height="7" fill="#665a66" />
          </g>
          <path d="M1112 518.500H1280" stroke="#5a1418" />
          <rect x="650" y="380" width="97" height="8" fill="#f6c490" /><rect x="684" y="382" width="59" height="4" fill="#fff05b" />
          <rect x="653" y="382" width="29" height="4" fill="#650066" /><path d="M684 384.500H746" stroke="#b8302f" stroke-dasharray="7 3" />

          <!-- corner wall -->
          <path d="M1109 665A66 66 0 0 1 1041 732" fill="none" stroke="#e9b79a" stroke-width="13" />
          <path d="M1109 665A66 66 0 0 1 1041 732" fill="none" stroke="#6e6927" stroke-width="7" />
          <rect x="1119" y="661" width="26" height="7" fill="#6e6927" stroke="#e9b79a" />
          <path d="M640 677H597V730" fill="none" stroke="#4fdaf0" stroke-width="5" /><path d="M640 680.500H601.500V730" fill="none" stroke="#3a72b4" stroke-width="2" />

          <!-- columns -->
          <rect v-for="(c, i) in columnsAt" :key="'c' + i" :x="c[0]" :y="c[1]" width="17" height="16" fill="#888" />
          <rect x="1101" y="652" width="19" height="17" fill="#929292" stroke="#b0b0b0" />
          <rect x="922" y="725" width="16" height="5" fill="#888" />

          <!-- doors -->
          <g v-for="d in doors" :key="d.l" fill="none" stroke="#54aaf0">
            <rect :x="d.l" y="455" width="29" height="7" fill="#22005c" stroke="none" /><rect :x="d.l" y="510" width="29" height="7" fill="#22005c" stroke="none" />
            <path :d="`M${d.hinge} 431A28 28 0 0 ${d.hinge > d.free ? 0 : 1} ${d.free} 459M${d.hinge} 541A28 28 0 0 ${d.hinge > d.free ? 1 : 0} ${d.free} 513`" />
            <path :d="`M${d.hinge} 431V459M${d.hinge} 513V541`" stroke="#3cc0f5" stroke-width="2" />
            <path :d="`M${d.hinge} 433v7M${d.hinge} 532v7`" stroke="#35d0f0" stroke-width="4" />
          </g>
          <path d="M653.500 357A28 28 0 0 1 681 384" fill="none" stroke="#54aaf0" /><path d="M653.500 357V384" stroke="#3cc0f5" stroke-width="3" />

          <!-- green dimension lines -->
          <g fill="none" stroke="#21b52c">
            <path d="M787 205.500H891M787.500 196V216M891.500 196V216M1111 205.500H1166M1111.500 196V218M1157.500 196V218M1166.500 196V218" />
            <path d="M906.500 216V237M898 218.500H914M949.500 210V237M942 210.500H957M969.500 235V248M955 241.500H982" />
            <path d="M699 425.500H796M881 425.500H978M1063 433.500H1184M699 552.500H796M881 552.500H978M1063 552.500H1111" />
            <path v-for="x in [699, 729, 767, 796, 881, 911, 949, 978]" :key="x" :d="`M${x}.5 418V437M${x}.5 540V560`" />
            <path d="M1063.500 426V446M1092.500 428V440M1184.500 426V446M1063.500 540V560M1092.500 540V560" />
            <path d="M1221.500 346V416M1246.500 346V416M1208 365.500H1229M1208 398.500H1229M1208 416.500H1229M1232 416.500H1258" />
            <path d="M613 578.500H639M663.500 660V680M655 660.500H670M655 680.500H670M598 713.500H680M705 722.500H747M705.500 718V730M656 366.500H682M681.500 360V374" />
            <path d="M1199 553.500H1250M1199 553l9 9 9-9M1140.500 268H1247M1140.500 268V320H1247M1093 718L1036 664M1167 228L1175 221H1184" />
            <circle cx="785" cy="272" r="15" stroke="#6d9c91" /><circle cx="816" cy="272" r="15" stroke="#6d9c91" /><path d="M770 272.500H859.500V245" stroke="#6d9c91" />
          </g>
          <g stroke="#22e22b" stroke-width="2">
            <path v-for="x in [747, 929, 1111]" :key="x" :d="`M${x - 5} 330H${x + 6}M${x} 323V337M${x - 5} 644H${x + 6}M${x} 637V651M${x} 417V432M${x} 545V560`" />
            <path d="M639 644H656M647 638V650M857 457H869M863 451V463M857 514H869M863 508V520M712 384H726M719 379V389M606 679H616" />
          </g>

          <!-- washroom -->
          <g fill="none" stroke="#e610dc">
            <g v-for="y in [273, 301, 328, 355]" :key="y">
              <ellipse :cx="728" :cy="y" rx="8" ry="7" /><ellipse :cx="727" :cy="y" rx="4" ry="3" stroke-width="2" /><path :d="`M722 ${y - 6}v12M734 ${y - 6}v12`" stroke-width="2" />
              <path :d="`M742 ${y - 13}H708v4L692 ${y}l16 9v5H742`" />
            </g>
            <path v-for="y in [268, 291, 313, 336]" :key="'u' + y" :d="`M649 ${y}h11`" />
            <path v-for="y in [279, 302, 325]" :key="'v' + y" :d="`M650 ${y - 6}v12l5-4v-4zM652 ${y - 2}v4`" />
            <path d="M684 389V405H742M690 391v6q8 9 16 0v-6M721 391v6q8 9 16 0v-6M690 391H706M721 391H737" /><circle cx="698" cy="396" r="3" /><circle cx="729" cy="396" r="3" />
          </g>

          <!-- stair -->
          <g fill="none" stroke="#cf9646">
            <path v-for="n in 10" :key="n" :d="`M${1157 + n * 9}.5 246V341`" stroke="#dd9a4e" />
            <path d="M1221 246L1247 290M1225 246L1248 286M1230 268l7-3-2 7 5-1" stroke="#f0a040" />
          </g>
          <rect x="1166" y="290" width="81" height="8" fill="#fff04d" stroke="#e0a45e" stroke-width="2" />
          <rect x="1157" y="239" width="9" height="5" fill="#cafff0" stroke="#49dacc" />
          <rect x="1187" y="342" width="60" height="8" fill="#f6c490" /><rect x="1189" y="344" width="58" height="4" fill="#fff05b" /><path d="M1189 346.500H1230" stroke="#be4a24" />

          <!-- lift -->
          <rect x="1110" y="344" width="78" height="75" fill="#8b8b8b" stroke="#e9b79a" stroke-width="3" />
          <rect x="1115" y="350" width="67" height="63" fill="#000" stroke="#b9a9b0" />
          <g fill="none" stroke="#74763a"><path d="M1136.500 358.500h37v49h-37zM1136 358l37 49M1173 358l-37 49M1124.500 364.500h8v36h-8z" /></g>
          <rect x="1183" y="364" width="5" height="35" fill="#ffe84f" /><rect x="1179" y="364" width="3" height="36" fill="#44c9d4" />
          <path d="M1138 347H1157M1150 342V352M1121 416H1140M1130 411V421M1180 411H1190M1184 405V417" stroke="#22e22b" stroke-width="2" />

          <!-- revolving door -->
          <g fill="none" stroke="#2cc6d0">
            <circle cx="1220.500" cy="665.500" r="39.500" /><path d="M1184 665A37 37 0 0 0 1258 665A37 37 0 0 0 1221 628" />
            <path d="M1146 664.500H1280M1146 673.500H1280M1186 671H1215M1225 662H1254" /><path d="M1220 630V660M1221 672V703" stroke-width="3" stroke="#1f9aa4" /><path d="M1221 627V703" />
            <path d="M1146.500 661V701Q1179 698 1181 668M1261 668Q1262 690 1280 701" />
          </g>

          <g class="axis"><text v-for="(m, i) in axisMarks" :key="i" :x="m[0]" :y="m[1]">{{ m[2] }}</text></g>
          <g class="bigdim"><text v-for="(m, i) in bigDims" :key="i" :x="m[0]" :y="m[1]" :transform="turn(m)">{{ m[2] }}</text></g>
          <g class="dim"><text v-for="(m, i) in dims" :key="i" :x="m[0]" :y="m[1]" :transform="turn(m)">{{ m[2] }}</text>
            <text x="1042" y="683" transform="rotate(45 1042 683)" class="radius">R2500</text></g>
          <g class="code"><text v-for="(m, i) in codes" :key="i" :x="m[0]" :y="m[1]" :transform="turn(m)">{{ m[2] }}</text></g>
          <g class="note"><text v-for="(m, i) in notes" :key="i" :x="m[0]" :y="m[1]" :transform="turn(m)">{{ m[2] }}</text>
            <text x="1034" y="697" transform="rotate(45 1034 697)">钢化玻璃幕墙</text><text x="1054" y="695" transform="rotate(45 1054 695)">圆弧</text></g>

          <!-- origin and cursor -->
          <path d="M545 680V660" stroke="#18d42a" stroke-width="4" /><path d="M545 650l5 12h-10z" fill="#18d42a" />
          <path d="M545 680H565" stroke="#e01818" stroke-width="4" /><path d="M575 680l-12-5v10z" fill="#e01818" />
          <circle cx="545" cy="680" r="5" fill="#0c14a8" /><text x="545" y="643" class="ax" fill="#18c42a">Y</text><text x="581" y="679" class="ax" fill="#e01818">X</text>
          <path d="M609 400.500H628M618.500 391V410M623 403h5l-5 7h5zM623 403l5 7" fill="none" stroke="#fff" />
        </svg>

        <aside class="viewbar">
          <button aria-label="动态观察"><svg viewBox="0 0 26 24" width="26" height="24"><circle cx="12" cy="11" r="8" fill="#dfe2e6" stroke="#555" /><circle cx="19" cy="8" r="4" fill="#f6f6f6" stroke="#777" /><path d="M2 19q-4-4 8-7t14-5M2 19q8 2 17-7" fill="none" stroke="#333" /></svg></button>
          <button aria-label="三维"><svg viewBox="0 0 26 26" width="26" height="26" fill="#9aa7b9" stroke="#3d434b"><path d="M1.500 7.500h18v17h-18zM1.500 7.500l6-6h17l-5 6zM19.500 7.500l5-6v17l-5 6z" /><text x="11" y="20" class="td">3D</text></svg></button>
          <button aria-label="俯视"><svg viewBox="0 0 26 26" width="26" height="26" fill="#d4e7fb" stroke="#3d434b"><path d="M1.500 6.500h17v17h-17zM1.500 6.500l6-5h17l-6 5zM18.500 6.500l6-5v17l-6 5z" /><path d="M7.500 2v16h17M7.500 18l-6 5.500" fill="none" stroke="#6688aa" /></svg></button>
          <span class="caret" />
          <button aria-label="实体"><svg viewBox="0 0 26 26" width="26" height="26" fill="#93a3bb" stroke="#3d434b"><path d="M1.500 7.500h18v17h-18zM1.500 7.500l6-6h17l-5 6zM19.500 7.500l5-6v17l-5 6z" /></svg></button>
          <span class="caret" />
          <button aria-label="旋转"><svg viewBox="0 0 26 26" width="26" height="26" fill="none" stroke="#444" stroke-width="2"><path d="M20 6a10 10 0 1 0 3 10M22 2v6h-6" /></svg></button>
          <span class="caret" />
          <hr>
          <button aria-label="显示设置"><svg viewBox="0 0 26 26" width="26" height="26" fill="none" stroke="#464f5c"><path d="M1.500 4.500l3-3h20v20l-3 3h-20zM1.500 5.500h20v19M21.500 5.500l3-4" fill="#8696ad" /><path d="M3.500 9.500h2v2h-2zM3.500 14h2v2h-2zM3.500 18.500h2v2h-2zM7 10.500h3M7 15h3M7 19.500h3M14 9.500h2v2h-2zM14 14h2v2h-2zM14 18.500h2v2h-2zM17.500 10.500h3M17.500 15h3M17.500 19.500h3M12 8v14" stroke="#20242a" /></svg></button>
        </aside>
      </section>
    </main>

    <footer class="status">
      <span class="s1">X = -4275 Y = 11056</span><span class="s2">层高： 3.9</span><span class="s3">标高： -0.05~3.85</span><span class="s4">0</span><span class="s5">隐藏 : 0</span>
      <button class="b24" aria-label="正交"><svg viewBox="0 0 16 16" width="16" height="16" fill="none" stroke="#555"><path d="M3.500 2v11.500H15M7.500 13V9.500H4" /></svg></button>
      <button class="b36 on" aria-label="捕捉"><svg viewBox="0 0 18 18" width="18" height="18"><path d="M4.500 3.500h11v12h-11z" fill="#fff" stroke="#666" /><rect x="1" y="1" width="5" height="5" fill="#dc8a60" /></svg><span class="caret" /></button>
      <button class="b24" aria-label="交点"><svg viewBox="0 0 18 18" width="18" height="18" stroke="#444"><path d="M2 1l14 16M16 1L2 17" /></svg></button>
      <button class="b36" aria-label="角度"><svg viewBox="0 0 18 18" width="18" height="18" stroke="#444" fill="none"><path d="M16 13.500H2L14 3M7 9q3 1 3 4" /></svg><span class="caret" /></button>
      <button class="b36" aria-label="偏移"><svg viewBox="0 0 18 18" width="18" height="18" stroke="#444"><path d="M4.500 1v8M.5 5.500h8" /><path d="M7 13h10" stroke-width="4" /></svg><span class="caret" /></button>
      <button class="b72">跨图层选择</button><button class="b60">折线选择</button>
      <span class="tip">按鼠标左键指定插入点,按右键结束或 ESC</span><span class="fps">100 FPS</span>
    </footer>

    <footer class="task">
      <button class="start" aria-label="开始">
        <svg viewBox="0 0 36 36" width="36" height="36"><defs><radialGradient id="orb" cy=".85" r=".9"><stop stop-color="#59e0f2" /><stop offset=".5" stop-color="#256c9f" /><stop offset="1" stop-color="#b8d0df" /></radialGradient></defs><circle cx="18" cy="18" r="17" fill="url(#orb)" stroke="#264c70" /><path d="M10 11q4-2 7 0l-1 7q-4-2-7 0z" fill="#e86437" /><path d="M19 11q4 2 8 0l-1 7q-4 2-8 0z" fill="#8abf3d" /><path d="M9 20q4-2 7 0l-1 6q-4-2-7 0z" fill="#4ca2dd" /><path d="M18 20q4 2 8 0l-1 6q-4 2-8 0z" fill="#f6cf42" /></svg>
      </button>
      <button class="plain" aria-label="云盘"><svg viewBox="0 0 32 32" width="32" height="32"><rect width="32" height="32" rx="5" fill="#2b9a53" /><path d="M7 22c-5 0-5-7 1-7 1-7 13-8 14-1 7-1 8 8 2 8z" fill="#fff" /></svg></button>
      <button class="plain" aria-label="浏览器"><svg viewBox="0 0 32 32" width="32" height="32"><circle cx="16" cy="16" r="15" fill="#f5c63a" /><path d="M16 16L3 8.500A15 15 0 0 1 29 8.500H16z" fill="#d9443a" /><path d="M3 8.500A15 15 0 0 0 15 31l6.500-12z" fill="#36985a" /><circle cx="16" cy="16" r="7" fill="#fff" /><circle cx="16" cy="16" r="5.500" fill="#437de0" /></svg></button>
      <button class="win" aria-label="编辑器"><svg viewBox="0 0 32 32" width="32" height="32"><rect width="32" height="32" rx="5" fill="#2e83ed" /><path d="M26 7q-5-5-10-1l-9 7q-2 3 1 5h6l-9 9" fill="none" stroke="#fff" stroke-width="4" /><path d="M27 14q-6-3-8 2-1 6 4 7 5-1 4-5h-4" fill="none" stroke="#e8f3ff" stroke-width="3" /></svg></button>
      <button class="win stack" aria-label="资源管理器"><svg viewBox="0 0 34 32" width="34" height="32"><path d="M1 4h9l2 2h7l2-2h10v25H3z" fill="#f0d68b" stroke="#ba9445" /><path d="M3 8h28v21H3z" fill="#fae9ac" /><path d="M5 31V20h25v11h-6v-6H11v6z" fill="#a6d8ef" stroke="#5a9fc7" /><path d="M12 4h4M24 5h4" stroke="#3c9b45" stroke-width="3" /></svg></button>
      <button class="win" aria-label="CAD"><svg viewBox="0 0 34 34" width="34" height="34"><rect x="1" y="1" width="32" height="32" rx="3" fill="#94adc5" /><rect x="3" y="3" width="28" height="28" fill="#175a9e" /><path d="M6 3h22v9H6z" fill="#0e3e78" /><text x="17" y="22" class="cad">CAD</text></svg></button>
      <button class="win on" aria-label="土建计量"><svg viewBox="0 0 32 32" width="32" height="32"><path d="M7 9q9 4 18 0" fill="none" stroke="#1da1ec" stroke-width="5" stroke-linecap="round" /><path d="M16 11v15" stroke="#1b8bdb" stroke-width="6" stroke-linecap="round" /></svg></button>
      <div class="tray">
        <svg viewBox="0 0 16 12" width="16" height="12" fill="none" stroke="#e6edf5"><path d="M1 2.500h14v8H1zM3 5h10M3 8h10M5 3v7M8 3v7M11 3v7" /></svg>
        <svg viewBox="0 0 8 6" width="8" height="6"><path d="M0 5l4-5 4 5z" fill="#fff" /></svg>
        <svg viewBox="0 0 16 16" width="16" height="16" fill="none" stroke="#fff"><path d="M1 5h3l4-4v14l-4-4H1z" fill="#fff" /><path d="M10 5q2 3 0 6M12 3q4 5 0 10" /></svg>
        <svg viewBox="0 0 18 18" width="18" height="18" fill="none" stroke="#fff"><path d="M5.500 5.500h11v8h-11zM9 16.500h7M12 14v2M1.500 1v5h4V1M3.500 6v7h2" stroke-width="1.500" /></svg>
      </div>
      <div class="clock"><span>9:05</span><span>2021/5/18</span></div>
      <button class="peek" aria-label="显示桌面" />
    </footer>
  </div>
</template>

<style>
html, body { background: #fff; }
</style>

<style scoped>
.app { position: relative; display: flex; flex-direction: column; height: 100vh; min-width: 1280px; overflow: hidden; font: 12px/16px "Noto Sans", "Noto Sans CJK SC", sans-serif; color: #1c1c1c; background: #f7f8fa; }
.app *, .app *::before { box-sizing: border-box; }
button { font: inherit; color: inherit; background: none; border: 0; padding: 0; margin: 0; display: flex; align-items: center; white-space: nowrap; }
svg { display: block; flex: none; }
.ic { width: 16px; height: 16px; }
.caret { display: inline-block; flex: none; width: 0; height: 0; border: 3px solid transparent; border-top: 3px solid #666; border-bottom: 0; }
.big-caret { border-width: 4px 4px 0; margin-left: 7px; }

.top { display: flex; flex: 0 0 41px; background: #fff; border-bottom: 1px solid #dde3ea; }
.logo { flex: 0 0 47px; border-right: 1px solid #d8dde3; height: 40px; }
.head { flex: 1; }
.titlebar { display: flex; align-items: center; height: 21px; padding-left: 8px; gap: 7px; }
.q { gap: 3px; }
.title { margin-left: -4px; white-space: nowrap; }
.menus { display: flex; height: 19px; padding-left: 3px; }
.menus button { padding: 0 13px; color: #444; }
.menus .on { background: #4a9df0; color: #fff; border-radius: 3px 3px 0 0; }
.winctl { flex: 0 0 76px; }
.wrow { display: flex; justify-content: flex-end; gap: 22px; padding: 4px 13px 0 0; }
.wrow.low { gap: 9px; padding: 6px 7px 0 0; }
.help { font-size: 15px; font-weight: 600; color: #888; gap: 3px; }

.remote { position: absolute; top: 0; right: 80px; width: 522px; height: 44px; display: flex; align-items: center; gap: 10px; padding: 3px 5px 0; border-top: 3px solid #0b0610; background: linear-gradient(#c9cef5, #91a6e6 20%, #91a7e8 75%, #aebbf0); z-index: 2; }
.grip { flex: 0 0 4px; height: 28px; background: repeating-linear-gradient(#405aa0 0 1px, #91a7e8 1px 2px); }
.rb { flex: 0 0 30px; height: 30px; font-size: 12px; line-height: 14px; color: #c42c10; background: #fff2a8; border: 1px solid #cc3c1c; display: block; text-align: center; }
.rb.dim { background: #a5b5ef; border-color: #eef2ff; color: #f5f7ff; }
.grip + .pin { margin: 0 -3px; }
.ri { flex: 0 0 30px; }

.ribbon { display: flex; flex: 0 0 98px; background: linear-gradient(#fdfdfe, #f5f6f9 70%, #eceef2); border-bottom: 1px solid #9fa2a8; }
.group { border-right: 1px solid #d4d8de; margin-bottom: 4px; display: flex; flex-direction: column; }
.tools { display: grid; height: 75px; padding: 3px 0 0 9px; }
.col { display: flex; flex-direction: column; }
.tool { height: 23px; gap: 3px; }
.tool .caret { margin-left: 5px; }
.off { color: #b3b5b8; }
.off .caret { border-top-color: #b3b5b8; }
.gt { display: flex; justify-content: center; align-items: center; height: 18px; }
.gt.low { padding-top: 3px; }
.g-pick { flex: 0 0 146px; }
.g-pick .tools { grid-template-columns: 47px 1fr; padding-left: 5px; }
.g-cad { flex: 0 0 194px; }
.g-cad .tools { grid-template-columns: 79px 1fr; }
.g-common { flex: 0 0 276px; }
.g-common .tools { grid-template-columns: 66px 111px 1fr; }
.g-edit { flex: 0 0 237px; }
.g-edit .tools { grid-template-columns: 54px 54px 54px 1fr; }
.g-draw { flex: 0 0 119px; }
.g-draw .tools { grid-template-columns: 40px 44px 1fr; padding-left: 6px; }
.g-draw .mini { padding-left: 2px; }
.g-room { flex: 0 0 138px; }
.g-second { flex: 0 0 102px; }
.g-second .tools { padding-left: 7px; justify-content: start; }
.big { flex-direction: column; gap: 5px; padding-top: 3px; height: 67px; margin-top: 2px; }
.big.on { background: #cfe1f6; border: 1px solid #8db8e4; padding-top: 2px; }

.selectors { display: flex; flex: 0 0 27px; gap: 3px; padding: 2px; background: #cbced3; border-bottom: 1px solid #a8abb0; }
.sel { position: relative; flex: 0 0 99px; height: 23px; }
.sel select { appearance: none; width: 100%; height: 100%; border: 1px solid #a8abb0; background: #fff; font: inherit; color: #1c1c1c; padding: 0 4px; border-radius: 0; }
.sel .caret { position: absolute; right: 4px; top: 10px; pointer-events: none; }

.main { flex: 1; min-height: 0; display: grid; grid-template-columns: 211px 280px 4px minmax(0, 1fr); grid-template-rows: minmax(0, 1fr); }
.panel { background: #fff; border: 1px solid #c4c6ca; border-top: 0; display: flex; flex-direction: column; min-height: 0; overflow: hidden; }
.strip { display: flex; justify-content: flex-end; flex: 0 0 13px; background: #d5d6da; padding-right: 4px; }
.navp h2 { margin: 0; font-size: 12px; font-weight: 400; color: #777; flex: 0 0 21px; line-height: 20px; padding-left: 8px; background: #f1eff3; border-bottom: 1px solid #d4d4d8; }
.navtools { display: flex; align-items: center; gap: 4px; flex: 0 0 31px; padding: 0 1px 0 6px; background: #f1eff3; border-bottom: 1px solid #ccccd0; }
.view { width: 22px; height: 22px; justify-content: center; border: 1px solid #68a5d4; border-radius: 4px; background: #e9f4fd; }
.navtools svg + .view { margin-left: auto; }
.navbody { position: relative; flex: 1; min-height: 0; overflow: hidden; padding-top: 2px; }
.vbar { position: absolute; right: 3px; top: 36px; width: 8px; bottom: 73px; border-radius: 4px; background: #cacaca; }
ul { list-style: none; margin: 0; padding: 0; }
.node { height: 24px; padding-left: 2px; gap: 5px; }
.fi { width: 16px; height: 16px; }
.vip { background: #f8d962; color: #9d7623; font: 700 9px/11px "Liberation Serif", serif; width: 30px; text-align: center; }
.leaf { height: 20px; margin: 2px 0 2px 40px; width: 88px; padding-left: 3px; gap: 6px; }
.leaf.on { background: #c8dcf4; }
.tree ul li { display: flex; height: 24px; }

.middle { display: grid; grid-template-rows: 263px minmax(0, 1fr); row-gap: 5px; padding-left: 4px; min-height: 0; }
.tabs { display: flex; flex: 0 0 22px; background: #f1eff3; border-bottom: 1px solid #cfcfd4; }
.tabs button { width: 65px; justify-content: center; color: #888; background: #e3e3e6; border-right: 1px solid #cfcfd4; }
.tabs .on { color: #222; background: #f6f5f8; font-weight: 500; }
.attrp .strip { flex-basis: 12px; }
.stools { display: flex; align-items: center; flex: 0 0 31px; padding-left: 4px; gap: 11px; background: #f3f1f5; border-bottom: 1px solid #d4d4d8; color: #333; }
.stools button { gap: 3px; }
.stools .caret { margin-left: 2px; }
.sheetbody { display: flex; flex: 1; min-height: 0; }
.clip { flex: 1; overflow: hidden; }
.rail { flex: 0 0 14px; padding: 14px 3px 0 2px; }
.rail span { display: block; height: 33px; border-radius: 4px; background: #cacaca; }
.hrail { flex: 0 0 14px; padding: 3px 106px 0 14px; }
.hrail span { display: block; height: 8px; border-radius: 4px; background: #c9c9c9; }
table { border-collapse: collapse; table-layout: fixed; width: 100%; }
td, th { padding: 0 0 0 4px; height: 21px; border: 1px solid #d2d2d6; font-weight: 400; white-space: nowrap; overflow: hidden; text-align: left; line-height: 16px; }
td { border-left-color: #dedee2; }
.sheets { margin: -1px 0 0 -1px; }
.sheets th { height: 25px; background: #f1eff3; text-align: center; padding: 0; color: #333; }
.sheets .hot { background: #78b7f8; color: #fff; font-weight: 600; }
.c1 { width: 171px; }
.c2 { width: 36px; }
.fold { display: inline-flex; justify-content: center; width: 13px; height: 13px; border: 1px solid #777; border-radius: 3px; font-size: 12px; line-height: 10px; margin-right: 6px; vertical-align: 0; }
.gr { padding-left: 2px; }
.sheets .nm { padding-left: 8px; }
.branch { display: inline-block; width: 15px; border-top: 1px dotted #c4c4c8; margin-right: 8px; vertical-align: 4px; }
.lk { padding: 0; }
.lk svg { margin: 0 auto; }
tr.on td { background: #dbe9fa; }
tr.on .nm { outline: 2px solid #7d8796; outline-offset: -2px; }
.attrbody { flex: 1; background: linear-gradient(90deg, #f1eff3 21px, #fff 21px); }
.attrs { margin: -1px 0 0 -1px; width: 273px; }
.attrs th { background: #f3f2f5; text-align: center; padding: 0; color: #444; }
.a1 { width: 22px; }
.a2 { width: 101px; }
.a4 { width: 41px; }
.attrs .no { background: #f1eff3; text-align: center; padding: 0; color: #444; }
.blue { color: #2c62c0; }
.grey { background: #ececee; }
.attrs .ck { padding: 0; text-align: center; line-height: 0; }
.ck input { appearance: none; width: 14px; height: 14px; margin: 0; border: 1px solid #777; border-radius: 3px; background: #fff; }
.attrs .fold { margin-right: 6px; }
.attrs td { padding-left: 3px; }
.splitter { align-self: start; margin-top: 233px; height: 100px; width: 4px; background: #65676c; }

.canvas { position: relative; min-width: 0; min-height: 0; background: #000; overflow: hidden; }
.plan { width: 100%; height: 100%; }
.plan text { text-anchor: middle; dominant-baseline: central; }
.axis text { font: 20px "Noto Sans", sans-serif; fill: #fff; }
.bigdim text { font: 17px "Noto Sans", sans-serif; fill: #fff; }
.dim text { font: 8px "Liberation Sans", sans-serif; fill: #fff; }
.dim .radius { font-size: 10px; }
.code text { font: 8px "Liberation Sans", sans-serif; fill: #2696ad; }
.note text { font: 700 5px "Noto Sans CJK SC", sans-serif; fill: #fff; }
.ax { font: 15px "Noto Sans", sans-serif; }
.td { font: 10px "Noto Sans", sans-serif; fill: #222; stroke: none; text-anchor: middle; }
.viewbar { position: absolute; top: 0; right: 0; width: 33px; display: flex; flex-direction: column; align-items: center; gap: 4px; padding: 9px 4px 10px; background: #a9aaad; border-radius: 0 0 0 4px; }
.viewbar .caret { margin: 1px 0 2px; }
.viewbar hr { width: 24px; margin: 0; border: 0; border-top: 1px solid #77797c; }

.status { display: flex; align-items: center; flex: 0 0 30px; padding-left: 2px; background: #e2e2e6; color: #333; white-space: nowrap; }
.status button { height: 24px; justify-content: center; border: 1px solid #a9a9ad; background: #d5d5d8; margin-right: 4px; gap: 4px; }
.status .on { background: #fff; border-color: #5d9fd4; }
.s1 { flex: 0 0 226px; } .s2 { flex: 0 0 83px; } .s3 { flex: 0 0 133px; } .s4 { flex: 0 0 103px; } .s5 { flex: 0 0 103px; }
.b24 { flex: 0 0 25px; } .b36 { flex: 0 0 36px; } .b72 { flex: 0 0 72px; } .b60 { flex: 0 0 61px; }
.fps { margin-left: 6px; }

.task { display: flex; align-items: center; flex: 0 0 40px; border-top: 1px solid #34445c; background: linear-gradient(90deg, #8092b0, #9fb5d6 64px, #a7bfe0 180px, #a7bfe0 1040px, #8496b2 1075px, #8294b0); color: #fff; }
.start { flex: 0 0 63px; padding-left: 9px; }
.plain { flex: 0 0 60px; justify-content: center; height: 38px; }
.plain:nth-child(2) { flex-basis: 52px; }
.plain:nth-child(3) { flex-basis: 68px; padding-left: 3px; }
.win { flex: 0 0 59px; height: 39px; margin-right: 3px; justify-content: center; border: 1px solid #50668a; border-radius: 3px; background: linear-gradient(135deg, #dde8f6, #b4c8e4); box-shadow: inset 0 0 0 1px #e4eefb; }
.win.stack { border-right-width: 3px; border-right-style: double; }
.win.on { background: #edf5fd; }
.cad { font: 700 12px "Liberation Sans", sans-serif; fill: #fff; text-anchor: middle; }
.tray { display: flex; align-items: center; gap: 13px; margin-left: auto; }
.clock { display: flex; flex-direction: column; align-items: center; line-height: 17px; width: 82px; }
.peek { width: 14px; height: 39px; border: 1px solid #56657d; background: linear-gradient(135deg, #a2b1c7, #5f6f88); }
</style>
